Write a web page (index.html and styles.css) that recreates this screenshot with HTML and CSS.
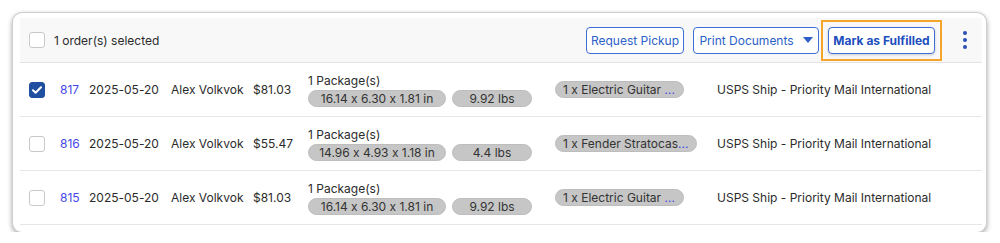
FILE: index.html
```html
<!DOCTYPE html>
<html>
<head>
<meta charset="utf-8">
<link rel="stylesheet" href="styles.css">
</head>
<body>
<div class="frame">
  <div class="panel">
    <div class="toolbar">
      <span class="cb"></span>
      <span class="sel-text">1 order(s) selected</span>
      <div class="actions">
        <button class="btn btn-pickup">Request Pickup</button>
        <button class="btn btn-print">Print Documents <svg class="caret" width="10" height="6" viewBox="0 0 10 6"><path d="M0 0h10L5 6z" fill="currentColor"/></svg></button>
        <span class="highlight"><button class="btn btn-strong">Mark as Fulfilled</button></span>
        <span class="kebab"><i></i><i></i><i></i></span>
      </div>
    </div>
    <div class="row">
      <span class="cb checked"><svg width="10" height="8" viewBox="0 0 10 8"><path d="M1 4.2l2.6 2.5L9 1.2" fill="none" stroke="#fff" stroke-width="2" stroke-linecap="round" stroke-linejoin="round"/></svg></span>
      <span class="num">817</span>
      <span>2025-05-20</span>
      <span>Alex Volkvok</span>
      <span>$81.03</span>
      <div class="pkg">
        <div class="pkg-title">1 Package(s)</div>
        <div class="pills"><span class="pill dims">16.14 x 6.30 x 1.81 in</span><span class="pill wt">9.92 lbs</span></div>
      </div>
      <div><span class="pill item">1 x Electric Guitar&nbsp;<span class="more">...</span></span></div>
      <span>USPS Ship - Priority Mail International</span>
    </div>
    <div class="row">
      <span class="cb"></span>
      <span class="num">816</span>
      <span>2025-05-20</span>
      <span>Alex Volkvok</span>
      <span>$55.47</span>
      <div class="pkg">
        <div class="pkg-title">1 Package(s)</div>
        <div class="pills"><span class="pill dims">14.96 x 4.93 x 1.18 in</span><span class="pill wt">4.4 lbs</span></div>
      </div>
      <div><span class="pill item">1 x Fender Stratocas<span class="more">...</span></span></div>
      <span>USPS Ship - Priority Mail International</span>
    </div>
    <div class="row">
      <span class="cb"></span>
      <span class="num">815</span>
      <span>2025-05-20</span>
      <span>Alex Volkvok</span>
      <span>$81.03</span>
      <div class="pkg">
        <div class="pkg-title">1 Package(s)</div>
        <div class="pills"><span class="pill dims">16.14 x 6.30 x 1.81 in</span><span class="pill wt">9.92 lbs</span></div>
      </div>
      <div><span class="pill item">1 x Electric Guitar&nbsp;<span class="more">...</span></span></div>
      <span>USPS Ship - Priority Mail International</span>
    </div>
  </div>
</div>
</body>
</html>
```

FILE: styles.css
```css
* { box-sizing: border-box; }
html, body { margin: 0; padding: 0; background: #fff; }
body {
  font-family: Inter, "Noto Sans", sans-serif;
  font-feature-settings: "calt" 0;
  font-size: 12px;
  color: #2b2b2b;
}
.frame {
  margin: 13px 0 0 13px;
  width: 973px;
  height: 219px;
  background: #fff;
  border-radius: 9px;
  box-shadow: 0 0 0 1px #cfcfcf, 0 2px 5px 1px rgba(0,0,0,0.35);
  padding: 5px 4px 7px 7px;
}
.panel {
  height: 207px;
  border-bottom: 1px solid #e2e2e2;
}
.toolbar {
  height: 45px;
  background: #f8f8f9;
  border-bottom: 1px solid #e3e3e3;
  display: flex;
  align-items: center;
  padding-left: 9px;
  padding-right: 7px;
}
.cb {
  width: 16px;
  height: 16px;
  border: 1px solid #c9c9c9;
  border-radius: 3px;
  background: #fff;
  display: inline-flex;
  align-items: center;
  justify-content: center;
}
.cb.checked {
  background: #1f4f9e;
  border-color: #1f4f9e;
}
.sel-text { margin-left: 9px; }
.actions {
  margin-left: auto;
  display: flex;
  align-items: center;
  gap: 9px;
}
.btn {
  font-family: inherit;
  font-feature-settings: "calt" 0;
  font-size: 12px;
  height: 27px;
  padding: 0;
  background: #fff;
  border: 1px solid #3d6fd6;
  border-radius: 4px;
  color: #2c5fc7;
  display: inline-flex;
  align-items: center;
  justify-content: center;
  gap: 9px;
}
.btn-pickup { width: 98px; }
.btn-print { width: 126px; }
.btn-strong {
  width: 107px;
  font-weight: 700;
  color: #1d4fbe;
  box-shadow: 0 1px 3px rgba(0,0,0,0.18);
}
.highlight {
  display: inline-flex;
  padding: 5px;
  border: 2px solid #f4a52a;
  margin: 0 -7px;
}
.caret { color: #2c5fc7; }
.kebab {
  margin-left: 11px;
  width: 20px;
  display: flex;
  flex-direction: column;
  align-items: center;
  gap: 3px;
}
.kebab i {
  width: 4px;
  height: 4px;
  border-radius: 50%;
  background: #2a4fb6;
}
.row {
  height: 54px;
  border-bottom: 1px solid #e6e6e6;
  display: grid;
  grid-template-columns: 31px 29px 82px 82px 55px 247px 162px 1fr;
  align-items: center;
  padding-left: 9px;
}
.num { color: #4646e6; }
.pkg-title { line-height: 15px; }
.pills {
  display: flex;
  gap: 6px;
  margin-top: 2px;
}
.pill {
  display: inline-flex;
  align-items: center;
  height: 17px;
  border-radius: 9px;
  background: #c6c6c6;
  border: 1px solid #bdbdbd;
  color: #333;
}
.dims { width: 138px; justify-content: center; }
.wt { width: 80px; justify-content: center; }
.item { padding: 0 8px 0 7px; }
.more { color: #4646e6; }
```
